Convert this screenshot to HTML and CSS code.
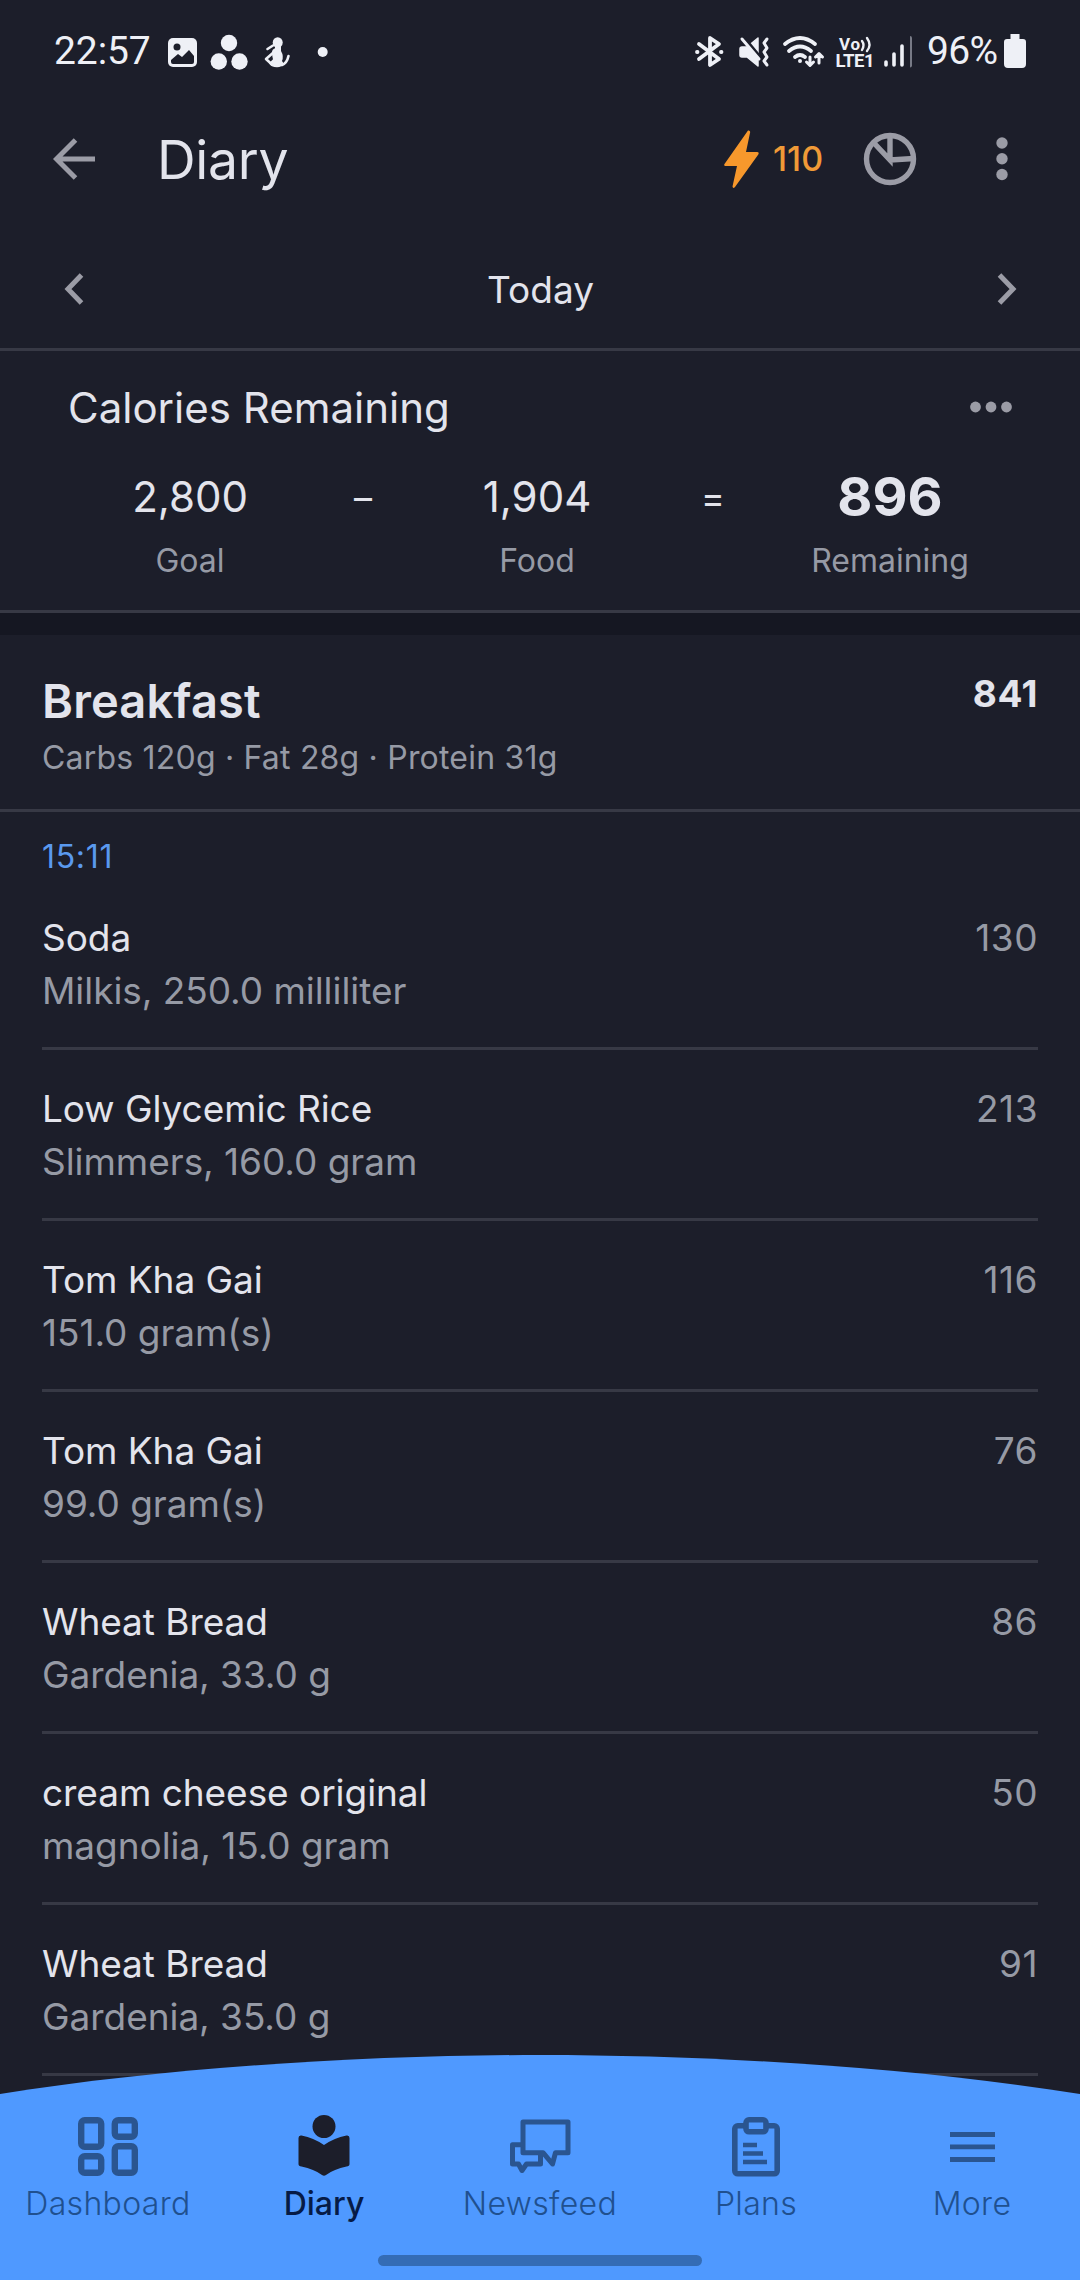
FILE: index.html
```html
<!DOCTYPE html>
<html lang="en">
<head>
<meta charset="utf-8">
<title>Diary</title>
<link rel="stylesheet" href="styles.css">
</head>
<body>
<div class="phone">
  <header class="status">
    <span class="clock">22:57</span>
    <svg class="status-left" width="180" height="50" viewBox="150 25 180 50">
      <rect x="168" y="37" width="29" height="29" rx="5" fill="#eef0f6"/>
      <circle cx="177" cy="46" r="3.500" fill="#1c1e2a"/>
      <path d="M171 59l7-6 4 3 7-7 5 6v6q0 2-2 2h-19q-2 0-2-2z" fill="#1c1e2a"/>
      <g fill="#eef0f6"><circle cx="229" cy="42" r="8.200"/><circle cx="218.800" cy="60.500" r="8.200"/><circle cx="239.500" cy="60.500" r="8.200"/>
      <ellipse cx="277.700" cy="41.500" rx="5" ry="5.300"/><path d="M275 45h6v5q3 5 1 10l2 3q-2 3-7 3.300-6 0-8-4l4-4q-1-4-1-7 0-3 3-4z"/>
      <circle cx="322.700" cy="51" r="5"/></g>
      <path d="M267.500 48l5.500-3.500M274 51l-8 7 6 5.500M282 64q5-2 6.500-9" fill="none" stroke="#eef0f6" stroke-width="2.600" stroke-linecap="round" stroke-linejoin="round"/>
    </svg>
    <svg class="status-right" width="220" height="50" viewBox="690 25 220 50" fill="none" stroke="#eef0f6" stroke-width="3.800" stroke-linecap="round" stroke-linejoin="round">
      <path d="M699 43l20 15-9 6V37l9 6-20 15"/><path d="M697 51h.5M721 51h.5"/>
      <path d="M742 46h5l11-9v28l-11-9h-5q-2 0-2-2v-6q0-2 2-2z" fill="#eef0f6" stroke="#eef0f6" stroke-width="1.500"/>
      <path d="M742 34l19 23" stroke="#1c1e2a" stroke-width="3"/><path d="M742 38l17 20" stroke-width="3"/>
      <path d="M767 38l-3 4 3 5-3 4 3 5-3 4 3 4" stroke-width="3"/>
      <path d="M785 43q15-12 30 0M789 50q11-9 22 0M795 56q5-4 10 0"/><circle cx="800" cy="60" r="1" fill="#eef0f6" stroke-width="2"/>
      <path d="M810 56v8m-3.500-3l3.500 3.500 3.500-3.500M819 62v-9m-3.500 3l3.500-3.500 3.500 3.500" stroke-width="3"/>
      <g fill="#eef0f6" stroke="none" font-family="Roboto" font-weight="700"><text x="839" y="49" font-size="17" textLength="21">Vo</text><text x="835.500" y="66" font-size="18.500" textLength="39">LTE1</text></g>
      <path d="M862 40q3 4 0 9M867 37q5 7 0 13" stroke-width="2.400"/>
      <path d="M886 61v3M894 53v11M902 45v19" stroke-width="3.600"/>
    </svg>
    <svg width="5" height="50" viewBox="0 0 5 50"><path d="M0 12.500V40" fill="none" stroke="#777a86" stroke-width="4" stroke-linecap="round" transform="translate(0 -.5)"/></svg>
    <span class="percent">96%</span>
    <svg class="battery" width="22" height="34" viewBox="0 0 22 34"><path d="M6.500 0h9v5H19q3 0 3 3v22q0 4-4 4H4q-4 0-4-4V8q0-3 3-3h3.500z" fill="#eef0f6"/></svg>
  </header>
  <div class="appbar">
    <svg width="42" height="42" viewBox="0 0 42 42" fill="none" stroke="#9b9ca6" stroke-width="5"><path d="M42 21H4M22.500 2L3.500 21l19 19"/></svg>
    <h1>Diary</h1>
    <svg class="bolt" width="35" height="58" viewBox="0 0 35 58"><path d="M24 0.500Q26 0 26.200 2L22 22h11q2.500 0 1.300 2.500L11 57q-2 2-2.500-.5L13 36H1.500Q-.5 36 .5 34z" fill="#f7982c"/></svg>
    <span class="streak">110</span>
    <svg class="pie" width="54" height="54" viewBox="0 0 54 54" fill="none" stroke="#9b9ca6" stroke-width="5.400"><circle cx="27" cy="27" r="23.500"/><path d="M27 3v25L10 10M27 28l24-1.500"/></svg>
    <svg class="kebab" width="12" height="46" viewBox="0 0 12 46" fill="#9b9ca6"><circle cx="6" cy="7" r="5.700"/><circle cx="6" cy="22.700" r="5.700"/><circle cx="6" cy="38.500" r="5.700"/></svg>
  </div>
  <div class="day">
    <svg width="20" height="32" viewBox="0 0 20 32" fill="none" stroke="#9b9ca6" stroke-width="5"><path d="M17.500 2L4 16l13.500 14"/></svg>
    <span>Today</span>
    <svg width="20" height="32" viewBox="0 0 20 32" fill="none" stroke="#9b9ca6" stroke-width="5"><path d="M2.500 2L16 16 2.500 30"/></svg>
  </div>
  <section class="summary">
    <div class="summary-head"><h2>Calories Remaining</h2>
      <svg width="42" height="12" viewBox="0 0 42 12" fill="#9b9ca6"><circle cx="5.500" cy="6" r="5.400"/><circle cx="21" cy="6" r="5.400"/><circle cx="36.500" cy="6" r="5.400"/></svg>
    </div>
    <div class="equation">
      <div class="term"><span class="value">2,800</span><span class="label">Goal</span></div>
      <span class="operator">–</span>
      <div class="term"><span class="value">1,904</span><span class="label">Food</span></div>
      <span class="operator">=</span>
      <div class="term"><span class="value total">896</span><span class="label">Remaining</span></div>
    </div>
  </section>
  <section class="meal">
    <div class="meal-head">
      <div><h2>Breakfast</h2><p>Carbs 120g · Fat 28g · Protein 31g</p></div>
      <strong>841</strong>
    </div>
    <div class="time">15:11</div>
    <ul>
      <li><div><p class="name">Soda</p><p class="detail">Milkis, 250.0 milliliter</p></div><span>130</span></li>
      <li><div><p class="name">Low Glycemic Rice</p><p class="detail">Slimmers, 160.0 gram</p></div><span>213</span></li>
      <li><div><p class="name">Tom Kha Gai</p><p class="detail">151.0 gram(s)</p></div><span>116</span></li>
      <li><div><p class="name">Tom Kha Gai</p><p class="detail">99.0 gram(s)</p></div><span>76</span></li>
      <li><div><p class="name">Wheat Bread</p><p class="detail">Gardenia, 33.0 g</p></div><span>86</span></li>
      <li><div><p class="name">cream cheese original</p><p class="detail">magnolia, 15.0 gram</p></div><span>50</span></li>
      <li><div><p class="name">Wheat Bread</p><p class="detail">Gardenia, 35.0 g</p></div><span>91</span></li>
    </ul>
  </section>
  <nav class="tabs">
    <svg class="curve" width="1080" height="225" viewBox="0 0 1080 225"><path d="M0 39C170 12 370 0 540 0s370 12 540 39v186H0z" fill="#4f99ff"/></svg>
    <div class="items">
      <a><svg width="70" height="66" viewBox="0 0 70 66" fill="none" stroke="#2a5590" stroke-width="6.400"><rect x="8.200" y="7.200" width="20" height="26.600" rx="3.500"/><rect x="41.800" y="7.200" width="20" height="16.600" rx="3.500"/><rect x="8.200" y="43.200" width="20" height="16.600" rx="3.500"/><rect x="41.800" y="33.200" width="20" height="26.600" rx="3.500"/></svg><span>Dashboard</span></a>
      <a class="active"><svg width="70" height="66" viewBox="0 0 70 66" fill="#1c1e2a"><circle cx="35" cy="13.500" r="11.500"/><path d="M9.500 25q0-3 3-2.500Q25 25 35 32q10-7 22.500-9.500 3-.5 3 2.500v26q0 2-3 2.500Q45 56 37 62q-2 1.500-4 0Q25 56 12.500 53.500q-3-.5-3-2.500z"/></svg><span>Diary</span></a>
      <a><svg width="70" height="66" viewBox="0 0 70 66" fill="none" stroke="#2a5590" stroke-width="5" stroke-linejoin="round"><path d="M18 9h45v30.700H50.500L47.500 51 38 39.700H18z"/><path d="M18 31.700H7.500V51h6l3.500 6.500 4.500-6.500H35.500V40"/></svg><span>Newsfeed</span></a>
      <a><svg width="70" height="66" viewBox="0 0 70 66" fill="none" stroke="#2a5590" stroke-width="5.600"><rect x="13.800" y="12.800" width="42.400" height="48" rx="3"/><rect x="25" y="6.800" width="20" height="12" rx="3" fill="#4f99ff"/><path d="M22 32h14M22 40.500h20M22 49h24" stroke-width="4.600"/></svg><span>Plans</span></a>
      <a><svg width="70" height="66" viewBox="0 0 70 66" stroke="#2a5590" stroke-width="4.800"><path d="M13 21.500h45M13 33.800h45M13 46.500h45"/></svg><span>More</span></a>
    </div>
    <div class="handle"></div>
  </nav>
</div>
</body>
</html>
```
FILE: styles.css
```css
* { box-sizing: border-box; }
body { margin: 0; background: #1c1e2a; }
h1, h2, p, ul { margin: 0; padding: 0; font-weight: 400; }
svg { display: block; flex: none; }
.phone { position: relative; width: 1080px; height: 2280px; overflow: hidden; background: #1c1e2a; color: #e3e4ec; font-family: Inter, sans-serif; }
.status { height: 101px; display: flex; align-items: center; padding-left: 54px; font-family: Roboto, sans-serif; font-size: 39px; color: #eef0f6; }
.clock { width: 96px; white-space: nowrap; letter-spacing: -.1px; }
.status-right { margin-left: 360px; }
.percent { margin-left: 12px; width: 77px; white-space: nowrap; letter-spacing: -.7px; }
.battery { margin-top: 0; }
.appbar { height: 115px; display: flex; align-items: center; padding: 0 72px 0 53px; }
.appbar h1 { font-size: 53.5px; margin-left: 62px; line-height: 66px; letter-spacing: -.3px; padding-top: 3px; }
.bolt { margin-left: auto; }
.streak { font-size: 34px; font-weight: 500; color: #f09a37; width: 52px; margin-left: 14px; }
.pie { margin-left: 38px; }
.kebab { margin-left: 79px; }
.day { height: 135px; display: flex; align-items: center; justify-content: space-between; padding: 14px 63px 0 64px; border-bottom: 3px solid #373945; font-size: 37px; }
.summary { height: 262px; border-bottom: 3px solid #373945; padding: 30px 0 0; }
.summary-head { display: flex; justify-content: space-between; align-items: center; height: 52px; padding: 0 68px; }
.summary-head h2 { font-size: 42px; }
.equation { display: grid; grid-template-columns: 242px 104px 244px 108px 246px; padding-left: 69px; margin-top: 30px; }
.term { display: flex; flex-direction: column; align-items: center; }
.value { font-size: 42px; line-height: 68px; }
.total { font-size: 54px; font-weight: 700; }
.label { font-size: 32px; line-height: 60px; color: #969aa5; }
.operator { text-align: center; font-size: 36px; line-height: 71px; }
.meal { border-top: 22px solid #151722; }
.meal-head { display: flex; justify-content: space-between; height: 177px; padding: 38px 42px 0; border-bottom: 3px solid #373945; }
.meal-head h2 { font-size: 47px; line-height: 56px; font-weight: 600; letter-spacing: .15px; }
.meal-head p { font-size: 32px; line-height: 57px; letter-spacing: .2px; color: #969aa5; }
.meal-head strong { font-size: 37px; line-height: 41px; font-weight: 700; letter-spacing: .5px; }
.time { height: 88px; padding: 25px 42px 0; font-size: 32px; line-height: 40px; letter-spacing: .7px; color: #5a99ee; }
ul { list-style: none; margin: 0 42px; }
li { display: flex; justify-content: space-between; height: 171px; padding-top: 32px; border-bottom: 3px solid #373945; font-size: 37px; line-height: 53px; letter-spacing: -.05px; }
li:first-child { height: 150px; padding-top: 11px; }
.detail, li span { color: #969aa5; }
li span { letter-spacing: .5px; }
.tabs { position: absolute; left: 0; bottom: 0; width: 1080px; height: 225px; }
.curve { position: absolute; inset: 0; }
.items { position: relative; display: grid; grid-template-columns: repeat(5, 216px); padding-top: 58px; }
.items a { display: flex; flex-direction: column; align-items: center; gap: 5px; font-size: 32px; font-weight: 300; line-height: 40px; letter-spacing: .35px; color: #20508f; }
.items .active { color: #061b46; font-weight: 500; letter-spacing: 0; }
.handle { position: relative; margin: 31px auto 0; width: 324px; height: 11px; border-radius: 6px; background: #346cb5; }
```
